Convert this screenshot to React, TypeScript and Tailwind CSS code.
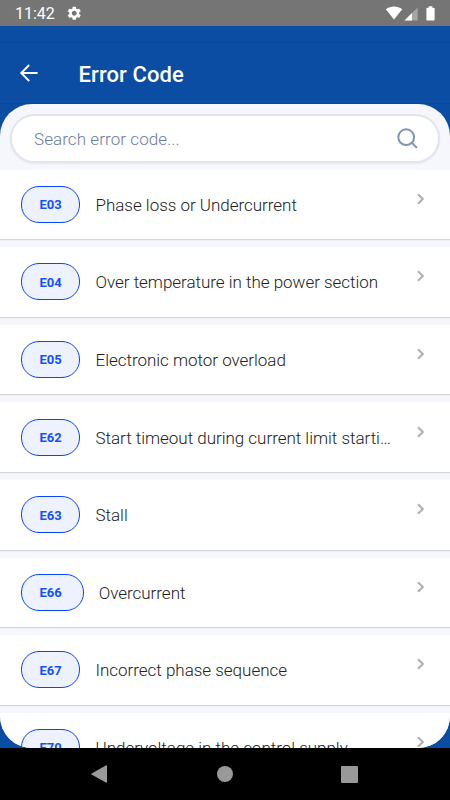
import { MdSettings } from "react-icons/md";

const errorCodes = [
  { code: "E03", label: "Phase loss or Undercurrent" },
  { code: "E04", label: "Over temperature in the power section" },
  { code: "E05", label: "Electronic motor overload" },
  { code: "E62", label: "Start timeout during current limit starting" },
  { code: "E63", label: "Stall" },
  { code: "E66", label: "Overcurrent", wide: true },
  { code: "E67", label: "Incorrect phase sequence" },
  { code: "E70", label: "Undervoltage in the control supply" },
];

function StatusBar() {
  return (
    <div className="flex h-[26px] shrink-0 items-center justify-between bg-[#757575] pl-[15px] pr-[15.5px] text-white">
      <div className="flex items-center">
        <span className="w-[51px] pt-[2px] text-[16px] leading-[24px]">11:42</span>
        <MdSettings className="size-[16.5px]" />
      </div>
      <div className="flex items-center">
        <svg className="h-[14px] w-[18px]" viewBox="0 0 18 14" fill="currentColor">
          <path d="M0.8 3.2C3.2 1.2 6.2 0.4 9 0.4s5.8.8 8.2 2.8L9 13.4z" />
        </svg>
        <svg className="ml-[1px] mt-[1px] h-[14px] w-[15px]" viewBox="0 0 15 14">
          <path d="M0.5 13.4 13.6 .4v13z" fill="#a6a6a6" />
          <path d="M0.5 13.4 8 6v7.4z" fill="#fff" />
        </svg>
        <svg className="ml-[7px] h-[15px] w-[9px]" viewBox="0 0 9 15" fill="currentColor">
          <path d="M2.7.3h3.6v1.5h1.5q.8 0 .8.8v11.1q0 .8-.8.8H1.2q-.8 0-.8-.8V2.6q0-.8.8-.8h1.5z" />
        </svg>
      </div>
    </div>
  );
}

function Header() {
  return (
    <header className="mt-[16px] flex h-[62px] shrink-0 items-center border-y border-[#0a4797] pl-[18px] text-white">
      <svg className="size-[22px]" viewBox="0 0 22 22" fill="none" stroke="currentColor" strokeWidth="1.8">
        <path d="M19.6 11H3.2M11.2 3 3.2 11l8 8" />
      </svg>
      <h1 className="ml-[38.5px] pt-[3px] text-[22px] leading-[26px] font-medium tracking-[0.1px]">Error Code</h1>
    </header>
  );
}

function SearchField() {
  return (
    <div className="mx-[10px] mt-[10px] flex h-[49px] shrink-0 items-center justify-between rounded-full border-2 border-[#e2e5ec] bg-white pl-[22px] pr-[20px] shadow-[0_1px_2px_rgba(0,0,0,0.06)]">
      <input
        className="min-w-0 flex-1 bg-transparent text-[17px] leading-[24px] font-light tracking-[0.08px] text-[#6a7ea3] outline-none placeholder:text-[#6a7ea3] placeholder:opacity-100"
        placeholder="Search error code..."
      />
      <svg className="size-[21px]" viewBox="0 0 21 21" fill="none" stroke="#8294b4" strokeWidth="2">
        <circle cx="9.2" cy="9.2" r="7.9" />
        <path d="m14.9 14.9 5 5" />
      </svg>
    </div>
  );
}

type RowProps = {
  code: string;
  label: string;
  wide?: boolean;
};

function ErrorRow({ code, label, wide }: RowProps) {
  return (
    <li className="flex h-[69.6px] shrink-0 items-center bg-white pl-[21px] pr-[25.5px] shadow-[0_1px_1px_rgba(0,0,0,0.14)]">
      <span
        className={`flex h-[37px] shrink-0 items-center rounded-[18px] border border-[#0a44ff] bg-[#eef2ff] pt-px pl-[17.5px] text-[13px] font-bold text-[#1450ff] ${
          wide ? "w-[62.5px]" : "w-[59.3px]"
        }`}
      >
        {code}
      </span>
      <span className="ml-[15.2px] w-[297px] shrink-0 truncate pt-px text-[17px] leading-[24px] font-light tracking-[-0.02px] text-[#222]">
        {label}
      </span>
      <svg
        className="mb-[11px] ml-auto h-[12px] w-[8px] shrink-0"
        viewBox="0 0 8 12"
        fill="none"
        stroke="#b0b0b0"
        strokeWidth="2.1"
      >
        <path d="m1 1.2 4.8 4.8-4.8 4.8" />
      </svg>
    </li>
  );
}

function NavigationBar() {
  return (
    <nav className="flex h-[52px] shrink-0 items-center bg-black pl-[91px] text-[#999]">
      <svg className="h-[18px] w-[16px]" viewBox="0 0 16 18" fill="currentColor">
        <path d="M15.2 0.3q.8-.4.8.6v16.2q0 1-.8.6L.6 9.4Q0 9 .6 8.6z" />
      </svg>
      <span className="ml-[110px] size-[16px] rounded-full bg-[#999]" />
      <span className="ml-[108px] size-[17px] rounded-[1px] bg-[#999]" />
    </nav>
  );
}

export default function App() {
  return (
    <div className="flex h-[800px] w-[450px] flex-col overflow-hidden bg-[#0b4da2] font-['Roboto',sans-serif]">
      <StatusBar />
      <Header />
      <main className="flex min-h-0 flex-1 flex-col overflow-hidden rounded-[32px] bg-[#f6f7fc]">
        <SearchField />
        <ul className="mt-[6.6px] flex flex-col gap-[8px]">
          {errorCodes.map((item) => (
            <ErrorRow key={item.code} {...item} />
          ))}
        </ul>
      </main>
      <NavigationBar />
    </div>
  );
}
